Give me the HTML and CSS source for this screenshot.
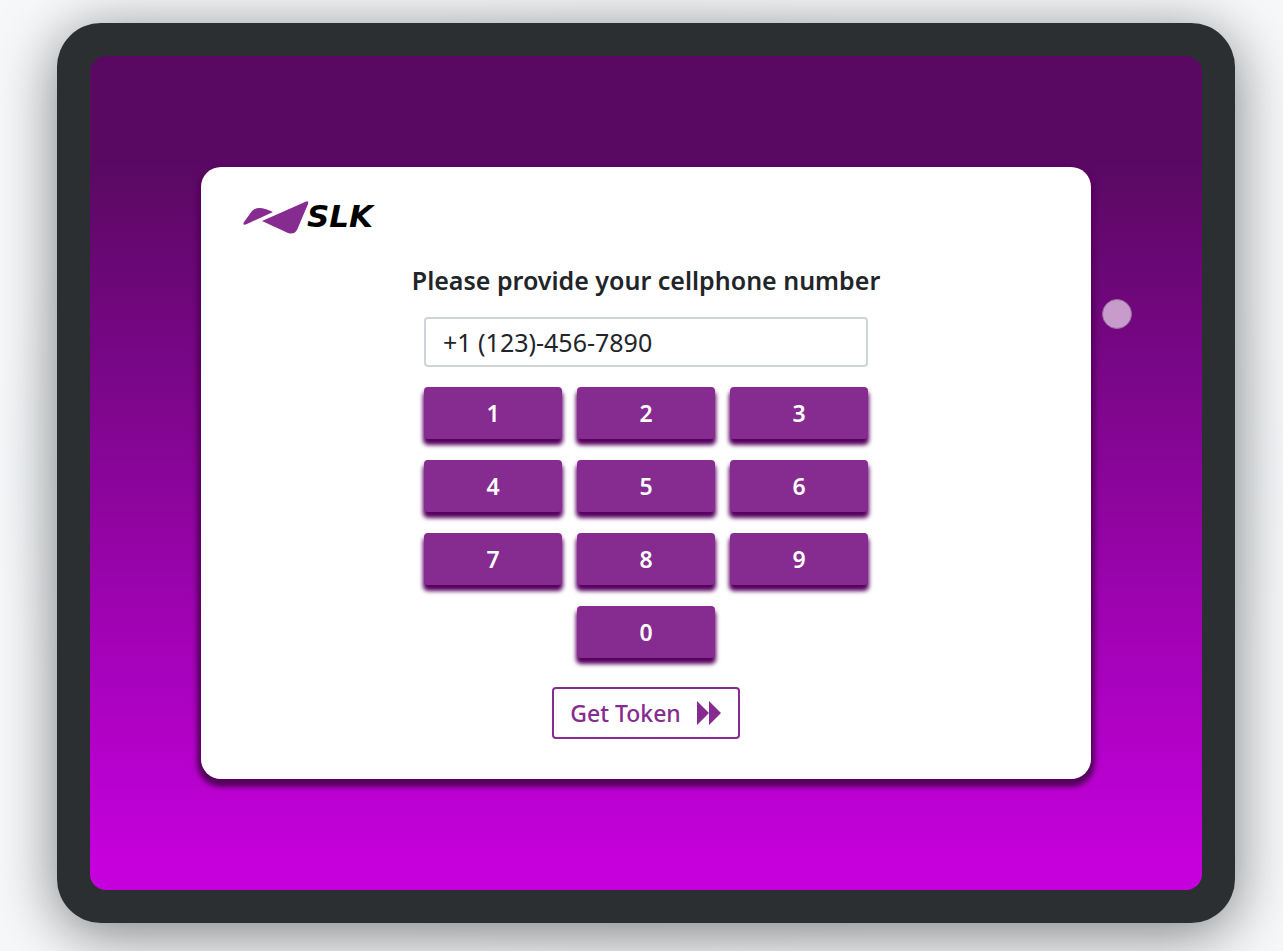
FILE: index.html
```html
<!DOCTYPE html>
<html lang="en">
<head>
<meta charset="utf-8">
<meta name="viewport" content="width=device-width, initial-scale=1">
<title>SLK Kiosk</title>
<link rel="stylesheet" href="styles.css">
</head>
<body>
<div class="device">
  <main class="screen">
    <form class="card">
      <svg class="logo" width="140" height="36" viewBox="0 0 140 36" role="img" aria-label="SLK">
        <path class="logo-mark" d="M1 21 L9 10 Q12 7 17 7 Q21 7 30 11 L4 23 Q-1 25 1 21Z"/>
        <path class="logo-mark" d="M19 20 L62 1 Q66 -1 65 3 L54 29 Q51 34 45 32Z"/>
        <text class="logo-text" x="64" y="26">SLK</text>
      </svg>
      <div class="entry">
        <label class="title" for="phone">Please provide your cellphone number</label>
        <input class="phone" id="phone" type="tel" value="+1 (123)-456-7890">
        <div class="keypad">
          <button class="key" type="button">1</button>
          <button class="key" type="button">2</button>
          <button class="key" type="button">3</button>
          <button class="key" type="button">4</button>
          <button class="key" type="button">5</button>
          <button class="key" type="button">6</button>
          <button class="key" type="button">7</button>
          <button class="key" type="button">8</button>
          <button class="key" type="button">9</button>
          <button class="key key-zero" type="button">0</button>
        </div>
        <button class="submit" type="button">
          <span>Get Token</span>
          <svg class="forward" width="26" height="26" viewBox="0 0 26 26" aria-hidden="true">
            <path d="M1 1 L13 13 L1 25Z M13 1 L25 13 L13 25Z"/>
          </svg>
        </button>
      </div>
    </form>
    <span class="pointer"></span>
  </main>
</div>
</body>
</html>
```
FILE: styles.css
```css
* {
  box-sizing: border-box;
}

body {
  margin: 0;
  padding: 23px 48px 28px 57px;
  min-height: 100vh;
  background: radial-gradient(ellipse at center, #e6ebee 40%, #f6f8fa 72%);
  font-family: "Segoe UI", "Noto Sans", sans-serif;
  color: #212529;
}

.device {
  padding: 33px;
  border-radius: 44px;
  background: #2c2f31;
  box-shadow: 0 10px 60px rgba(0, 0, 0, 0.5);
}

.screen {
  position: relative;
  padding: 10%;
  border-radius: 16px;
  background: linear-gradient(#590962 12%, #c500dd 97%);
}

.card {
  padding: 34px 42px 40px;
  border-radius: 20px;
  background: #fff;
  box-shadow: 0 4px 5px 4px #56005f;
}

.logo {
  display: block;
  overflow: visible;
}

.logo-mark {
  fill: #862b8f;
}

.logo-text {
  font: italic bold 31px "DejaVu Sans", sans-serif;
  fill: #000;
}

.entry {
  display: flex;
  flex-direction: column;
  align-items: center;
  padding-top: 27px;
}

.title {
  font-size: 25px;
  font-weight: 600;
  line-height: 32px;
}

.phone {
  width: 444px;
  max-width: 100%;
  height: 50px;
  margin-top: 21px;
  padding: 0 17px;
  border: 2px solid #ced4da;
  border-radius: 4px;
  background: #fff;
  color: #212529;
  font: 25px "Segoe UI", "Noto Sans", sans-serif;
}

.keypad {
  display: grid;
  grid-template-columns: repeat(3, 1fr);
  gap: 21px 15px;
  width: 444px;
  max-width: 100%;
  margin-top: 20px;
}

.key {
  height: 52px;
  padding: 0;
  border: 0;
  border-radius: 4px;
  background: #862b8f;
  box-shadow: 0 5px 4px 1px #56005f;
  color: #fff;
  font: 600 23px "Segoe UI", "Noto Sans", sans-serif;
}

.key-zero {
  grid-column: 2;
}

.submit {
  display: flex;
  align-items: center;
  gap: 15px;
  height: 52px;
  margin-top: 29px;
  padding: 0 16px;
  border: 2px solid #862b8f;
  border-radius: 4px;
  background: #fff;
  color: #862b8f;
  font: 500 23px "Segoe UI", "Noto Sans", sans-serif;
}

.forward {
  fill: #862b8f;
}

.pointer {
  position: absolute;
  top: 243px;
  right: 70px;
  width: 30px;
  height: 30px;
  border: 1px solid #9b6aa2;
  border-radius: 50%;
  background: #c79ccb;
}
```
